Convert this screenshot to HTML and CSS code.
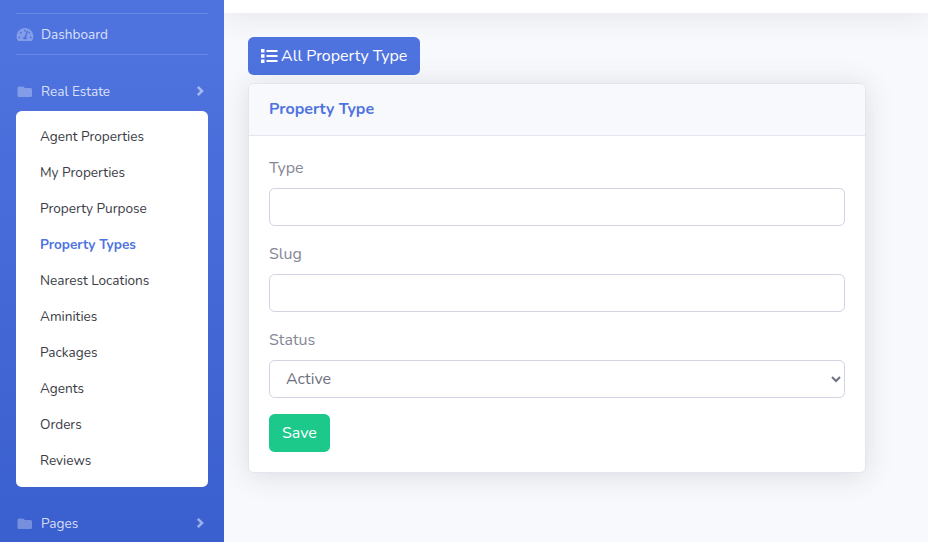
FILE: index.html
```html
<!DOCTYPE html>
<html lang="en">
<head>
<meta charset="utf-8">
<title>Property Type</title>
<link rel="stylesheet" href="styles.css">
</head>
<body>
<div class="wrapper">
  <nav class="sidebar">
    <div class="nav-main">
      <a class="nav-link">
        <svg class="nav-icon" viewBox="0 0 576 512"><path d="M288 32C128.94 32 0 160.94 0 320c0 52.8 14.25 102.26 39.06 144.8 5.61 9.62 16.3 15.2 27.44 15.2h443c11.14 0 21.83-5.58 27.44-15.2C561.75 422.26 576 372.8 576 320c0-159.06-128.94-288-288-288zm0 64c14.71 0 26.58 10.13 30.32 23.65-1.11 2.26-2.64 4.23-3.45 6.67l-9.22 27.67c-5.13 3.49-10.97 6.01-17.64 6.01-17.67 0-32-14.33-32-32S270.33 96 288 96zM96 384c-17.67 0-32-14.33-32-32s14.33-32 32-32 32 14.33 32 32-14.33 32-32 32zm48-160c-17.67 0-32-14.33-32-32s14.33-32 32-32 32 14.33 32 32-14.33 32-32 32zm246.77-72.41l-61.33 184C343.13 347.33 352 364.54 352 384c0 11.72-3.38 22.55-8.88 32H232.88c-5.5-9.45-8.88-20.28-8.88-32 0-33.94 26.5-61.43 59.9-63.59l61.34-184.01c4.17-12.56 17.73-19.45 30.36-15.17 12.57 4.19 19.35 17.79 15.17 30.36zm14.66 57.2l15.52-46.55c3.47-1.29 7.13-2.23 11.05-2.23 17.67 0 32 14.33 32 32s-14.33 32-32 32c-11.38-.01-20.89-6.28-26.57-15.22zM480 384c-17.67 0-32-14.33-32-32s14.33-32 32-32 32 14.33 32 32-14.33 32-32 32z"/></svg>
        <span>Dashboard</span>
      </a>
    </div>
    <a class="nav-link nav-parent">
      <svg class="nav-icon folder" viewBox="0 0 16 11"><path d="M1.5 2Q1.5.5 3 .5h4L9 2h5.500q1.500 0 1.500 1.500v6q0 1.500-1.500 1.500H3q-1.500 0-1.500-1.500z"/></svg>
      <span>Real Estate</span>
      <svg class="chevron" viewBox="0 0 8 12"><path d="M1.800 1.800L6 6 1.800 10.200"/></svg>
    </a>
    <div class="submenu">
      <a>Agent Properties</a>
      <a>My Properties</a>
      <a>Property Purpose</a>
      <a class="active">Property Types</a>
      <a>Nearest Locations</a>
      <a>Aminities</a>
      <a>Packages</a>
      <a>Agents</a>
      <a>Orders</a>
      <a>Reviews</a>
    </div>
    <a class="nav-link nav-parent">
      <svg class="nav-icon folder" viewBox="0 0 16 11"><path d="M1.5 2Q1.5.5 3 .5h4L9 2h5.500q1.500 0 1.500 1.500v6q0 1.500-1.500 1.500H3q-1.500 0-1.500-1.500z"/></svg>
      <span>Pages</span>
      <svg class="chevron" viewBox="0 0 8 12"><path d="M1.800 1.800L6 6 1.800 10.200"/></svg>
    </a>
  </nav>
  <div class="content">
    <div class="topbar"></div>
    <main>
      <a class="btn btn-list">
        <svg class="list-icon" viewBox="0 0 17 16"><path d="M0 1h3.500v3.500H0zM0 6.200h3.500v3.500H0zM0 11.400h3.500v3.500H0zM5.500 2h11v2h-11zM5.500 7h11v2h-11zM5.500 12h11v2h-11z"/></svg>
        <span>All Property Type</span>
      </a>
      <section class="card">
        <header class="card-header"><h6>Property Type</h6></header>
        <form class="card-body">
          <label for="type">Type</label>
          <input id="type" class="control" type="text">
          <label for="slug">Slug</label>
          <input id="slug" class="control" type="text">
          <label for="status">Status</label>
          <select id="status" class="control"><option>Active</option></select>
          <button class="btn btn-save" type="button">Save</button>
        </form>
      </section>
    </main>
  </div>
</div>
</body>
</html>
```
FILE: styles.css
```css
* { box-sizing: border-box; }
body {
  margin: 0;
  font: 16px/24px Nunito, Lato, sans-serif;
  color: #858796;
  background: #f8f9fc;
}
.wrapper { display: flex; height: 542px; overflow: hidden; }
.sidebar {
  flex: 0 0 224px;
  padding: 13px 16px 0;
  background: linear-gradient(180deg, #4e73df 50px, #3a5fce 542px);
}
.nav-main {
  height: 42px;
  border-top: 1px solid rgba(255, 255, 255, .15);
  border-bottom: 1px solid rgba(255, 255, 255, .15);
}
.nav-link {
  display: flex;
  align-items: center;
  height: 40px;
  font-size: 13.6px;
  color: rgba(255, 255, 255, .8);
}
.nav-link span { padding-top: 1px; }
.nav-parent { margin-top: 16px; }
.nav-icon { width: 18px; height: 15px; margin-right: 7px; fill: rgba(255, 255, 255, .3); }
.folder { width: 16px; height: 11px; margin-right: 9px; }
.chevron {
  width: 8px;
  height: 12px;
  margin: 0 4px 0 auto;
  fill: none;
  stroke: rgba(255, 255, 255, .5);
  stroke-width: 2.600;
}
.submenu {
  height: 376px;
  padding: 8px 24px;
  border-radius: 5.6px;
  background: #fff;
  font-size: 13.6px;
  color: #3a3b45;
}
.submenu a { display: block; height: 36px; line-height: 35px; }
.submenu .active { color: #4e73df; font-weight: 700; }
.content { flex: 1; min-width: 0; overflow: hidden; }
.topbar {
  height: 13px;
  background: #fff;
  box-shadow: 0 2.4px 28px rgba(58, 59, 69, .15);
}
main { padding: 24px; }
.btn {
  display: flex;
  align-items: center;
  height: 38px;
  padding: 0 13px;
  border: 0;
  border-radius: 5.6px;
  color: #fff;
  font: 16px/24px Nunito, Lato, sans-serif;
}
.btn-list { position: relative; width: 172px; gap: 3px; background: #4e73df; white-space: nowrap; }
.list-icon { flex: none; width: 17px; height: 16px; fill: currentColor; }
.card {
  position: relative;
  width: 618px;
  height: 390px;
  margin-top: 8px;
  border: 1px solid #e3e6f0;
  border-radius: 5.6px;
  background: #fff;
  box-shadow: 0 2.4px 28px rgba(58, 59, 69, .15);
}
.card-header {
  height: 52px;
  padding: 13px 20px;
  border-bottom: 1px solid #e3e6f0;
  border-radius: 5px 5px 0 0;
  background: #f8f9fc;
}
h6 { margin: 0; font-size: 16px; line-height: 24px; color: #4e73df; }
.card-body { padding: 20px; }
label { display: block; height: 24px; margin-bottom: 8px; }
.control {
  display: block;
  width: 100%;
  height: 38px;
  margin-bottom: 16px;
  padding: 6px 12px;
  border: 1px solid #d1d3e2;
  border-radius: 5.6px;
  background: #fff;
  color: #6e707e;
  font: inherit;
}
select.control { padding-right: 0; }
.btn-save { width: 61px; background: #1cc88a; }
```
